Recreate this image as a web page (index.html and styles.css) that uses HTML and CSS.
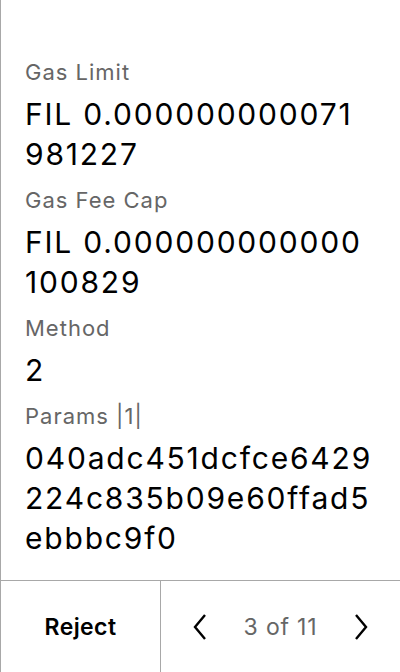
FILE: index.html
```html
<!DOCTYPE html>
<html>
<head>
<meta charset="utf-8">
<link rel="stylesheet" href="styles.css">
</head>
<body>
<div class="screen">
  <div class="content">
    <div class="field">
      <div class="label">Gas Limit</div>
      <div class="value">FIL 0.000000000071<br>981227</div>
    </div>
    <div class="field">
      <div class="label">Gas Fee Cap</div>
      <div class="value">FIL 0.000000000000<br>100829</div>
    </div>
    <div class="field">
      <div class="label">Method</div>
      <div class="value">2</div>
    </div>
    <div class="field">
      <div class="label">Params |1|</div>
      <div class="value">040adc451dcfce6429<br>224c835b09e60ffad5<br>ebbbc9f0</div>
    </div>
  </div>
  <div class="footer">
    <div class="reject">Reject</div>
    <div class="pager">
      <svg class="chev" width="16" height="26" viewBox="0 0 16 26"><path d="M13 1 L3 13 L13 25" fill="none" stroke="#000" stroke-width="2.4"/></svg>
      <span class="count">3 of 11</span>
      <svg class="chev" width="16" height="26" viewBox="0 0 16 26"><path d="M3 1 L13 13 L3 25" fill="none" stroke="#000" stroke-width="2.4"/></svg>
    </div>
  </div>
</div>
</body>
</html>
```
FILE: styles.css
```css
html, body {
  margin: 0;
  padding: 0;
  background: #fff;
}
body {
  font-family: Inter, "Noto Sans", sans-serif;
  color: #000;
}
.screen {
  width: 399px;
  height: 672px;
  border-left: 1px solid #a8a8a8;
  display: flex;
  flex-direction: column;
}
.content {
  flex: 1;
  padding: 60px 0 0 24px;
  display: flex;
  flex-direction: column;
  gap: 14px;
  overflow: hidden;
}
.label {
  font-size: 22px;
  line-height: 24px;
  letter-spacing: 1px;
  color: #666;
  margin-bottom: 10px;
}
.value {
  font-size: 30px;
  line-height: 40px;
  letter-spacing: 1.8px;
  color: #000;
  white-space: nowrap;
}
.footer {
  height: 91px;
  border-top: 1px solid #a8a8a8;
  display: flex;
}
.reject {
  width: 159px;
  border-right: 1px solid #a8a8a8;
  display: flex;
  align-items: center;
  justify-content: center;
  font-size: 23px;
  font-weight: 600;
  letter-spacing: 0.4px;
}
.pager {
  flex: 1;
  display: flex;
  align-items: center;
  justify-content: center;
  gap: 36px;
}
.count {
  font-size: 23px;
  letter-spacing: 0.8px;
  color: #666;
}
.chev {
  display: block;
}
```
